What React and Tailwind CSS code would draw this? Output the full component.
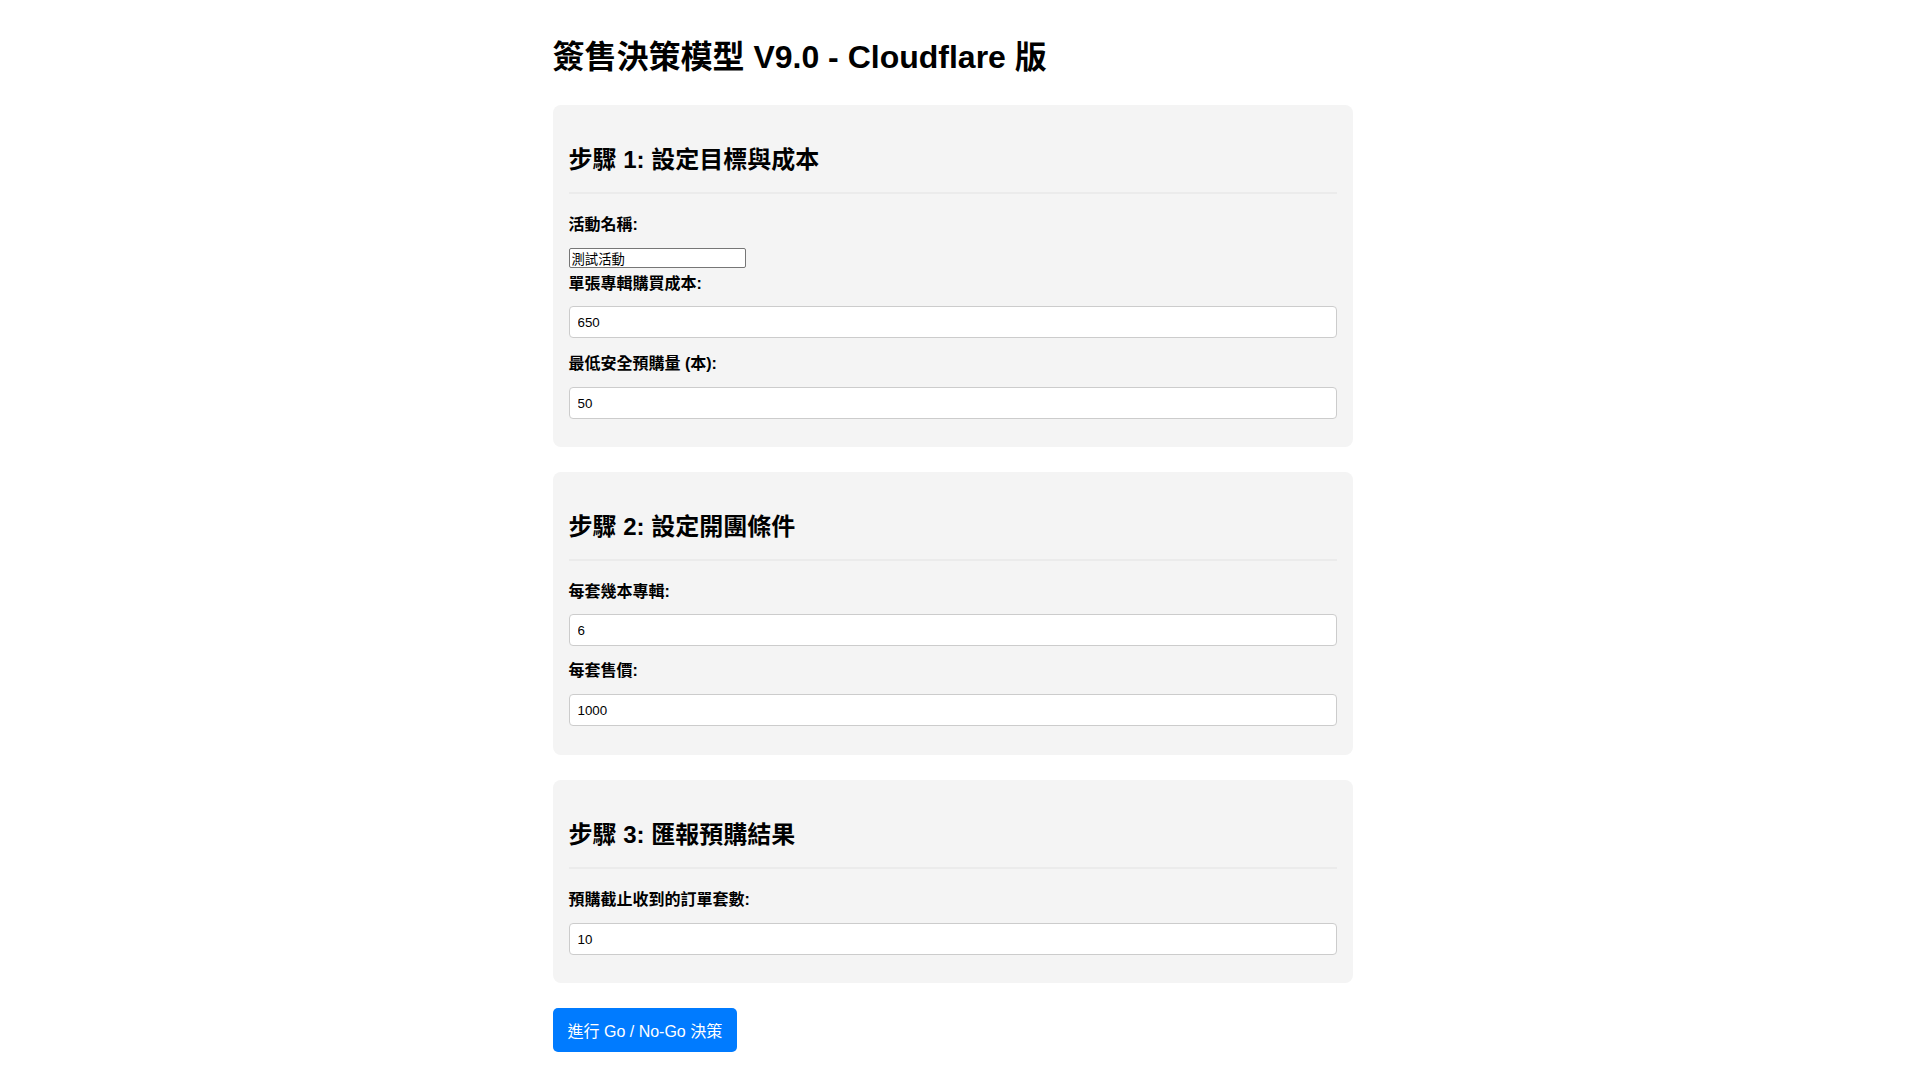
export default function App() {
  return (
    <div className="min-h-screen bg-white text-black font-['Liberation_Sans','Noto_Sans_CJK_TC',sans-serif] pr-[15px] pb-[48px]">
      <div className="max-w-[800px] mx-auto">
        <h1 className="pt-[37px] text-[32px] leading-[40px] font-bold">
          簽售決策模型 V9.0 - Cloudflare 版
        </h1>

        {/* step 1 */}
        <section className="mt-[28px] bg-[#f4f4f4] rounded-lg px-4 pt-4 pb-[28px]">
          <h2 className="mt-[24px] text-[24px] leading-[30px] font-bold pb-[17px] border-b-2 border-[#ebebeb]">
            步驟 1: 設定目標與成本
          </h2>
          <label className="block mt-[19px] text-base leading-[24px] font-bold">活動名稱:</label>
          <input
            type="text"
            defaultValue="測試活動"
            className="block mt-[11px] w-[177px] h-[20px] bg-white border border-[#767676] rounded-[2px] px-[2px] text-[13.33px] leading-[16px]"
          />
          <label className="block mt-[4px] text-base leading-[24px] font-bold">單張專輯購買成本:</label>
          <input
            type="number"
            defaultValue="650"
            className="block mt-[10px] w-full h-[32px] bg-white border border-[#ccc] rounded-[4px] px-[8px] text-[13.33px]"
          />
          <label className="block mt-[14px] text-base leading-[24px] font-bold">最低安全預購量 (本):</label>
          <input
            type="number"
            defaultValue="50"
            className="block mt-[11px] w-full h-[32px] bg-white border border-[#ccc] rounded-[4px] px-[8px] text-[13.33px]"
          />
        </section>

        {/* step 2 */}
        <section className="mt-[25px] bg-[#f4f4f4] rounded-lg px-4 pt-4 pb-[29px]">
          <h2 className="mt-[24px] text-[24px] leading-[30px] font-bold pb-[17px] border-b-2 border-[#ebebeb]">
            步驟 2: 設定開團條件
          </h2>
          <label className="block mt-[19px] text-base leading-[24px] font-bold">每套幾本專輯:</label>
          <input
            type="number"
            defaultValue="6"
            className="block mt-[10px] w-full h-[32px] bg-white border border-[#ccc] rounded-[4px] px-[8px] text-[13.33px]"
          />
          <label className="block mt-[13px] text-base leading-[24px] font-bold">每套售價:</label>
          <input
            type="number"
            defaultValue="1000"
            className="block mt-[11px] w-full h-[32px] bg-white border border-[#ccc] rounded-[4px] px-[8px] text-[13.33px]"
          />
        </section>

        {/* step 3 */}
        <section className="mt-[25px] bg-[#f4f4f4] rounded-lg px-4 pt-4 pb-[28px]">
          <h2 className="mt-[24px] text-[24px] leading-[30px] font-bold pb-[17px] border-b-2 border-[#ebebeb]">
            步驟 3: 匯報預購結果
          </h2>
          <label className="block mt-[19px] text-base leading-[24px] font-bold">預購截止收到的訂單套數:</label>
          <input
            type="number"
            defaultValue="10"
            className="block mt-[11px] w-full h-[32px] bg-white border border-[#ccc] rounded-[4px] px-[8px] text-[13.33px]"
          />
        </section>

        <button className="mt-[25px] h-[44px] px-[15px] pt-[3px] bg-[#007bff] text-white text-base rounded-[5px]">
          進行 Go / No-Go 決策
        </button>
      </div>
    </div>
  );
}
